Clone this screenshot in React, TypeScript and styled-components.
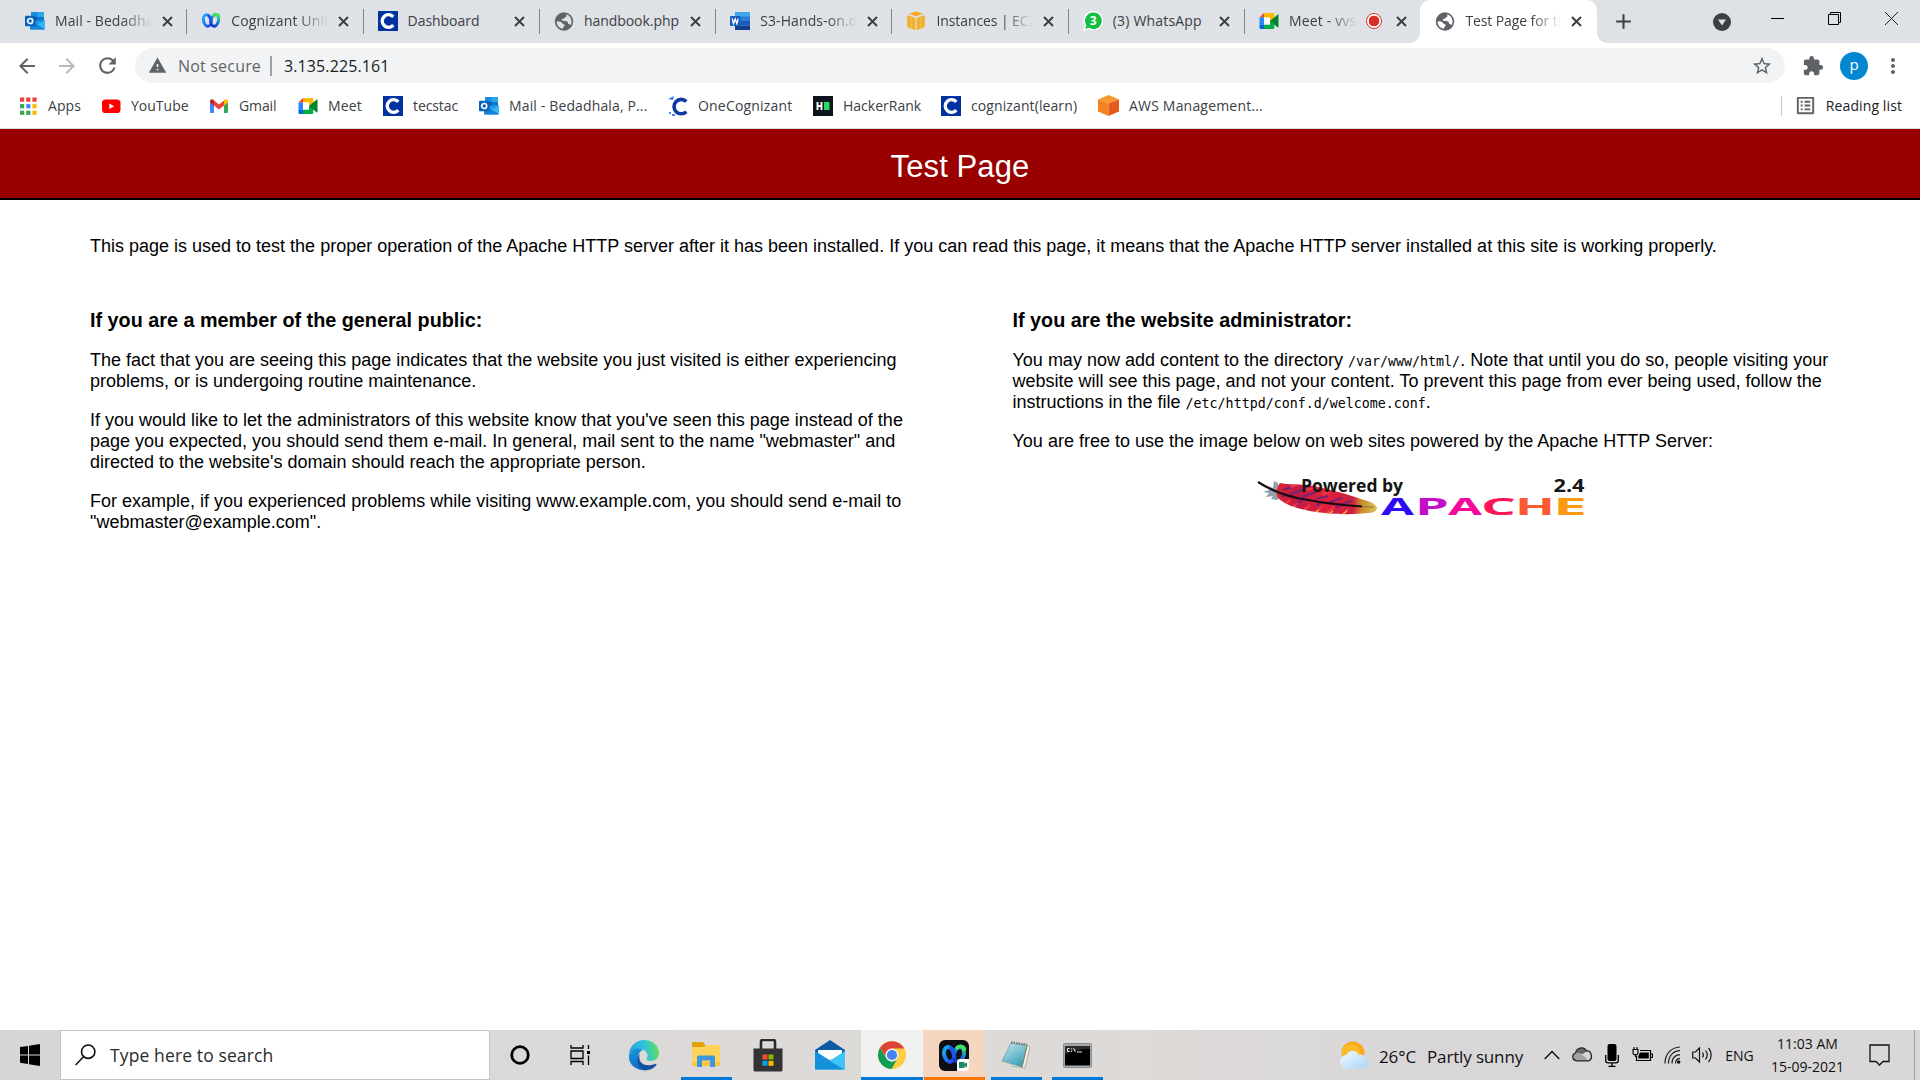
import React from "react";
import styled, { createGlobalStyle, css } from "styled-components";
import {
  MdWarning,
  MdRefresh,
  MdArrowBack,
  MdArrowForward,
  MdStarBorder,
  MdExtension,
  MdMoreVert,
  MdAdd,
  MdOutlineListAlt,
} from "react-icons/md";

const ui = `"Open Sans", "Noto Sans", sans-serif`;

const Global = createGlobalStyle`
  * { box-sizing: border-box; }
  body { margin: 0; background: #fff; overflow: hidden; }
  svg { display: block; flex: none; }
`;

const Screen = styled.div`
  width: 1920px;
  height: 1080px;
  display: flex;
  flex-direction: column;
  font-family: ${ui};
  color: #3c4043;
`;

/* ---------- tab strip ---------- */
const TabStrip = styled.div`
  height: 43px;
  display: flex;
  padding-left: 10px;
  background: #dee1e6;
`;

const TabBox = styled.div<{ $active?: boolean; $bare?: boolean }>`
  position: relative;
  width: 176.3px;
  height: 43px;
  flex: none;
  display: flex;
  align-items: center;
  padding: 0 0 1px 15px;
  ${(p) =>
    p.$active
      ? css`
          background: #fff;
          border-radius: 10px 10px 0 0;
          &::before,
          &::after {
            content: "";
            position: absolute;
            bottom: 0;
            width: 10px;
            height: 10px;
          }
          &::before {
            left: -10px;
            background: radial-gradient(circle at 0 0, transparent 9.5px, #fff 10px);
          }
          &::after {
            right: -10px;
            background: radial-gradient(circle at 100% 0, transparent 9.5px, #fff 10px);
          }
        `
      : css`
          &::after {
            content: "";
            position: absolute;
            right: -1px;
            top: 9px;
            width: ${p.$bare ? 0 : 1}px;
            height: 25px;
            background: #80868b;
          }
        `}
`;

const TabLabel = styled.span<{ $w: number; $fade?: boolean; $ls?: number }>`
  width: ${(p) => p.$w}px;
  margin-left: 10px;
  overflow: hidden;
  white-space: nowrap;
  font-size: 14px;
  line-height: 20px;
  letter-spacing: ${(p) => p.$ls ?? 0}px;
  ${(p) =>
    p.$fade &&
    css`
      mask-image: linear-gradient(to right, #000 calc(100% - 30px), transparent);
    `}
`;

const TabClose = styled.span<{ $gap?: number }>`
  width: 20px;
  margin-left: ${(p) => p.$gap ?? 5}px;
  display: flex;
  justify-content: center;
`;

const RecDot = styled.span`
  width: 16px;
  height: 16px;
  margin-left: 8px;
  border: 1.5px solid #d93025;
  border-radius: 50%;
  background: radial-gradient(circle, #d93025 5px, #fff 5.6px);
`;

const NewTab = styled.div`
  width: 53px;
  display: flex;
  align-items: center;
  justify-content: center;
  color: #3c4043;
`;

const Grow = styled.div`
  flex: 1;
`;

const WindowCell = styled.div<{ $w: number; $h: number }>`
  width: ${(p) => p.$w}px;
  height: ${(p) => p.$h}px;
  display: flex;
  align-items: center;
  justify-content: center;
`;

/* ---------- toolbar ---------- */
const Toolbar = styled.div`
  height: 45px;
  display: flex;
  align-items: center;
  padding: 0 9px 0 7px;
  color: #5f6368;
`;

const NavButton = styled.span<{ $dim?: boolean }>`
  width: 40px;
  display: flex;
  justify-content: center;
  color: ${(p) => (p.$dim ? "#bababc" : "#5f6368")};
`;

const Omnibox = styled.div`
  width: 1650px;
  height: 35px;
  margin-left: 8px;
  display: flex;
  align-items: center;
  padding: 0 12px 0 13px;
  border-radius: 18px;
  background: #f1f3f4;
  font-size: 16px;
`;

const NotSecure = styled.span`
  margin-left: 11px;
  padding-right: 9px;
  border-right: 2px solid #9aa0a6;
  line-height: 20px;
  letter-spacing: 0.19px;
`;

const Url = styled.span`
  margin-left: 12px;
  color: #202124;
  letter-spacing: 0.1px;
`;

const ToolCell = styled.span<{ $w: number }>`
  width: ${(p) => p.$w}px;
  display: flex;
  justify-content: center;
`;

const Avatar = styled.span`
  width: 28px;
  height: 28px;
  border-radius: 50%;
  background: #0288d1;
  color: #fff;
  font-size: 15px;
  line-height: 25px;
  text-align: center;
`;

/* ---------- bookmarks ---------- */
const Bookmarks = styled.div`
  height: 41px;
  display: flex;
  align-items: center;
  padding: 0 0 5px 18px;
  border-bottom: 1px solid #dadce0;
  font-size: 14px;
`;

const Bookmark = styled.span<{ $w: number; $ls?: number }>`
  width: ${(p) => p.$w}px;
  display: flex;
  align-items: center;
  gap: 10px;
  white-space: nowrap;
  letter-spacing: ${(p) => p.$ls ?? 0}px;
`;

const ReadingList = styled.span`
  height: 20px;
  display: flex;
  align-items: center;
  gap: 9px;
  padding: 0 18px 0 12px;
  border-left: 1px solid #c4c7cb;
  color: #202124;
  letter-spacing: 0.1px;
`;

/* ---------- page ---------- */
const Banner = styled.header`
  height: 71px;
  background: #990000;
  border-bottom: 2px solid #000;
  color: #fff;
  font: 31px/75px "Liberation Sans", Arial, sans-serif;
  letter-spacing: 0.1px;
  text-align: center;
`;

const Article = styled.main`
  flex: 1;
  padding: 36px 90px 0;
  font: 18px/21px "Liberation Sans", Arial, sans-serif;
  color: #000;
`;

const Intro = styled.p`
  margin: 0 0 52px;
`;

const Columns = styled.div`
  display: grid;
  grid-template-columns: 817.5px 817.5px;
  justify-content: space-between;
`;

const Heading = styled.h2`
  margin: 0 0 18px;
  font-size: 19.8px;
  line-height: 23px;
`;

const Para = styled.p`
  margin: 0 0 18px;
`;

const Code = styled.code`
  font: 13.3px/1 "DejaVu Sans Mono", monospace;
`;

const LogoRow = styled.div`
  display: flex;
  justify-content: center;
  padding-left: 2px;
`;

/* ---------- taskbar ---------- */
const Taskbar = styled.footer`
  height: 50px;
  display: flex;
  background: linear-gradient(to right, #d8d5d8 0, #dcdad8 30%, #dddad8 60%, #d8d6d8 75%, #d9d7d8);
  color: #111;
`;

const TaskCell = styled.div<{ $w: number; $bg?: string }>`
  position: relative;
  width: ${(p) => p.$w}px;
  height: 50px;
  flex: none;
  display: flex;
  align-items: center;
  justify-content: center;
  background: ${(p) => p.$bg ?? "transparent"};
`;

const Running = styled.i<{ $w: number; $color?: string }>`
  position: absolute;
  bottom: 0;
  left: calc(50% - ${(p) => p.$w / 2}px);
  width: ${(p) => p.$w}px;
  height: 3px;
  background: ${(p) => p.$color ?? "#0078d7"};
`;

const Search = styled.div`
  width: 430px;
  height: 50px;
  display: flex;
  align-items: center;
  gap: 14px;
  padding-left: 14px;
  border: 1px solid #c6c4c6;
  background: #fff;
  font-size: 17.5px;
  letter-spacing: 0.12px;
  color: #2b2b2b;
`;

const Weather = styled.div`
  width: 197px;
  display: flex;
  align-items: center;
  font-size: 17px;
  white-space: nowrap;
`;

const Temp = styled.span`
  margin: 3px 11px 0 11px;
  letter-spacing: -0.1px;
`;

const Sky = styled.span`
  margin-top: 3px;
  letter-spacing: -0.15px;
`;

const TrayText = styled.div<{ $w: number }>`
  width: ${(p) => p.$w}px;
  display: flex;
  flex-direction: column;
  align-items: center;
  justify-content: center;
  padding-right: 1px;
  font-size: 14px;
  line-height: 23px;
`;

const DesktopEdge = styled.div`
  width: 6px;
  margin-left: 9px;
  border-left: 1px solid #a3a1a3;
`;

/* ---------- icons ---------- */
const Close = () => (
  <svg width="11" height="11" viewBox="0 0 11 11" stroke="#3c4043" strokeWidth="2">
    <path d="M1 1l9 9M10 1l-9 9" />
  </svg>
);

const Globe = ({ land = "#dee1e6" }: { land?: string }) => (
  <svg width="20" height="19" viewBox="-.5 0 20 19">
    <circle cx="9.500" cy="9.500" r="9.200" fill="#5f6368" />
    <path d="M11.500 2.300c3.300.9 5.500 3.700 5.500 7.200 0 1.400-.3 2.600-1 3.700-.6-.9-1.300-1.200-2.300-1.100-.2-1.600-.4-2.600-1.700-2.900-2.200-.4-4.300.2-4.700-1.200-.3-1.300 2.300-.7 2.700-1.900.3-1.200 1.900-1 2-2.200z" fill={land} />
    <path d="M2.100 9.300c2.200.2 4.800.2 5.300 1.600.4 1.200 2.600.6 2.700 2 .1 1.500-1.600 1.600-1.900 3.900C4.600 16.200 2.100 13.200 2.100 9.300z" fill={land} />
  </svg>
);

const Outlook = () => (
  <svg width="20" height="20" viewBox="0 0 20 20">
    <path d="M6 1h13v12H6z" fill="#0f6cbd" />
    <path d="M6 1h6.500v5H6z" fill="#1490df" />
    <path d="M12.500 1H19v5h-6.500z" fill="#28a8ea" />
    <path d="M6 6h6.500v4.500H6z" fill="#0a5aa8" />
    <path d="M12.500 6H19v4h-6.500z" fill="#0f78d4" />
    <path d="M5 9.500l15 0V17.500a1 1 0 0 1-1 1H6a1 1 0 0 1-1-1z" fill="#1e9be6" />
    <path d="M20 9.500v8.600L12.300 13.600z" fill="#35b8f1" />
    <path d="M5 9l15 9.500H6a1 1 0 0 1-1-1z" fill="#1483d8" />
    <rect x="0" y="4.800" width="10.500" height="10.500" rx="1" fill="#0a63b8" />
    <circle cx="5.200" cy="10" r="2.500" fill="none" stroke="#fff" strokeWidth="1.700" />
  </svg>
);

const WebexMark = ({ size = 20 }: { size?: number }) => (
  <svg width={size} height={size} viewBox="0 0 20 20" fill="none" strokeLinecap="round">
    <defs>
      <linearGradient id="wxL" x1="0" y1="0" x2="0.6" y2="1">
        <stop offset="0" stopColor="#18b8f2" />
        <stop offset="1" stopColor="#1f4df5" />
      </linearGradient>
      <linearGradient id="wxR" x1="0.7" y1="0" x2="0.4" y2="1">
        <stop offset="0" stopColor="#3bd16f" />
        <stop offset="0.35" stopColor="#1a8fd8" />
        <stop offset="1" stopColor="#1230c8" />
      </linearGradient>
    </defs>
    <ellipse cx="6.200" cy="9.500" rx="3.700" ry="5.800" transform="rotate(-14 6.200 9.500)" stroke="url(#wxL)" strokeWidth="3" />
    <ellipse cx="13.800" cy="9.500" rx="3.700" ry="5.800" transform="rotate(14 13.800 9.500)" stroke="url(#wxR)" strokeWidth="3" />
    <path d="M12.500 4.300c1.500-1.400 4.500-1.300 5.500 1" stroke="#46dd6a" strokeWidth="3" />
    <path d="M7.500 4.500c1.800 1.500 2.200 4.500 2.400 6.500" stroke="#1c55f2" strokeWidth="2.600" />
  </svg>
);

const CognizantC = () => (
  <svg width="20" height="20" viewBox="0 0 20 20">
    <rect width="20" height="20" fill="#0033a0" />
    <path d="M15.300 5.900A6.300 6.300 0 1 0 15.300 14.100" fill="none" stroke="#fff" strokeWidth="3.300" />
  </svg>
);

const OneCognizant = () => (
  <svg width="20" height="20" viewBox="0 0 20 20">
    <path d="M0 3L6 0 5 4z" fill="#2f7df6" />
    <path d="M1 16h2v2H1zM4 18h3v2H4z" fill="#4a8cf7" />
    <path d="M18.300 5.500A7.200 7.200 0 1 0 18.300 15.700" fill="none" stroke="#0b3aa6" strokeWidth="3.600" />
  </svg>
);

const Word = () => (
  <svg width="20" height="20" viewBox="0 0 20 20">
    <path d="M5 1h15v5H5z" fill="#41a5ee" />
    <path d="M5 5.500h15V10H5z" fill="#2b7cd3" />
    <path d="M5 10h15v4.500H5z" fill="#185abd" />
    <path d="M5 14.500h15V19H5z" fill="#103f91" />
    <rect x="0" y="5" width="10.500" height="10" rx="1" fill="#185abd" />
    <path d="M2.200 7.500l1.300 5.200 1.700-4.700 1.700 4.700 1.300-5.200" fill="none" stroke="#fff" strokeWidth="1.300" />
  </svg>
);

const Instances = () => (
  <svg width="20" height="20" viewBox="0 0 20 20">
    <path d="M10 .5l7 2.200-7 2.600-7-2.600z" fill="#fba919" />
    <path d="M1.200 4.200L9.400 7v12.300l-8.200-3.300z" fill="#f2b02c" />
    <path d="M18.800 4.200l-8.200 2.800v12.300l8.200-3.300z" fill="#f2b02c" />
    <path d="M5.300 5.800v12M14.700 5.800v12" stroke="#f8c860" strokeWidth=".6" />
  </svg>
);

const WhatsBadge = () => (
  <svg width="20" height="20" viewBox="0 0 20 20">
    <path d="M10.300 0a9.700 9.700 0 1 1-4.500 18.300L0 20l1.700-5.500A9.700 9.700 0 0 1 10.300 0z" fill="#fff" />
    <path d="M10.300 1.500a8.300 8.300 0 1 1-4.300 15.300L2.200 18l1.200-3.700A8.300 8.300 0 0 1 10.300 1.500z" fill="#12bf42" />
    <text x="10.200" y="14.400" fontSize="12" fontWeight="700" fill="#fff" textAnchor="middle" fontFamily="Open Sans, sans-serif">3</text>
  </svg>
);

const MeetMark = () => (
  <svg width="20" height="18" viewBox="0 0 20 18">
    <path d="M5 1h9a1.300 1.300 0 0 1 1.300 1.300V9H11V5.500H5z" fill="#ffba00" />
    <path d="M5 1v4.500H.5z" fill="#ea4335" />
    <path d="M.5 5.500H5v7H.5z" fill="#2684fc" />
    <path d="M.5 12.500H5V17H1.800A1.300 1.300 0 0 1 .5 15.700z" fill="#0066da" />
    <path d="M5 12.500h6V9h4.300v6.700A1.300 1.300 0 0 1 14 17H5z" fill="#00ac47" />
    <path d="M5 5.500h6v7H5z" fill="#fff" />
    <path d="M11 9l7.500-6.300c.5-.4 1-.1 1 .5v11.600c0 .6-.5.9-1 .5z" fill="#00832d" />
  </svg>
);

const AppsGrid = () => {
  const colors = ["#ea4335", "#ea4335", "#ea4335", "#34a853", "#4285f4", "#fbbc05", "#34a853", "#34a853", "#fbbc05"];
  return (
    <svg width="20" height="20" viewBox="0 0 20 20">
      {colors.map((c, i) => (
        <rect key={i} x={2 + (i % 3) * 6.200} y={1.500 + Math.floor(i / 3) * 6.600} width="4.200" height="4.200" fill={c} />
      ))}
    </svg>
  );
};

const YouTube = () => (
  <svg width="20" height="20" viewBox="0 0 20 20">
    <rect x="1" y="3.500" width="18.500" height="13.500" rx="3.600" fill="#f00" />
    <path d="M8.300 7.500l5 2.800-5 2.800z" fill="#fff" />
  </svg>
);

const Gmail = () => (
  <svg width="20" height="20" viewBox="0 0 20 20">
    <path d="M1 6l4 3v8H2.200A1.200 1.200 0 0 1 1 15.800z" fill="#4285f4" />
    <path d="M19 6l-4 3v8h2.800a1.200 1.200 0 0 0 1.200-1.200z" fill="#34a853" />
    <path d="M5 4.500l5 3.900 5-3.900v5l-5 3.900-5-3.900z" fill="#ea4335" />
    <path d="M1 5.400C1 3.300 3.200 2.800 4.300 3.800L5 4.500v5L1 6.500z" fill="#c5221f" />
    <path d="M19 5.400c0-2.100-2.200-2.600-3.300-1.600l-.7.700v5l4-3z" fill="#fbbc04" />
  </svg>
);

const Hacker = () => (
  <svg width="20" height="20" viewBox="0 0 20 20">
    <rect width="20" height="20" fill="#0e141e" />
    <path d="M4.500 6v8M8.500 6v8M4.500 10h4" stroke="#fff" strokeWidth="1.900" />
    <rect x="11" y="6" width="5.500" height="8" fill="#1ee05f" />
  </svg>
);

const AwsCube = () => (
  <svg width="21" height="21" viewBox="0 0 21 21">
    <path d="M10.500 0L21 4.500 10.500 8.500 0 4.500z" fill="#fb9a2c" />
    <path d="M0 4.500l10.500 4V21L0 16.500z" fill="#f58220" />
    <path d="M21 4.500l-10.500 4V21L21 16.500z" fill="#e8591c" />
  </svg>
);

const Feather = () => (
  <svg width="330" height="50" viewBox="1257 470 330 50">
    <defs>
      <linearGradient id="fth" x1="1278" y1="0" x2="1378" y2="0" gradientUnits="userSpaceOnUse">
        <stop offset="0" stopColor="#de2233" />
        <stop offset=".2" stopColor="#c01c44" />
        <stop offset=".45" stopColor="#e0203a" />
        <stop offset=".75" stopColor="#cc2040" />
        <stop offset=".83" stopColor="#c98a2e" />
        <stop offset="1" stopColor="#dcc75a" />
      </linearGradient>
      <clipPath id="vane">
        <path d="M1280 483l6 1 22 1c18 3 42 10 56 15 8 2 13 5 13 8 0 3-4 5-10 5-8 1-26 2-42 0-12-1-22-3-34-7-7-3-13-7-14-10-1-4 0-9 3-13z" />
      </clipPath>
    </defs>
    <path d="M1274 481l4 2 2 10-2 7-7-1 2-3-7 1 3-4-6-1 6-2-1-4 5 2z" fill="#93a1ac" />
    <g clipPath="url(#vane)">
      <rect x="1270" y="480" width="110" height="38" fill="url(#fth)" />
      <path d="M1283 490l9-3M1290 494l16-5M1302 497l14-5M1316 499l12-3M1330 502l12-4M1343 504l8-3M1282 497l5-3M1296 505l7-6M1316 506l6-4M1336 508l7-4" stroke="#5b2386" strokeWidth="2" opacity=".75" />
      <path d="M1280 508l10-8M1290 510l8-7M1302 512l8-7M1314 513l8-6M1326 514l8-7M1342 515l6-6M1354 515l5-6M1290 487l10-3M1306 490l12-3M1322 494l8-2" stroke="#fa4148" strokeWidth="2" opacity=".8" />
      <path d="M1290 509l4-3M1300 512l5-3M1313 514l6-4M1327 515l6-4M1342 515l5-4" stroke="#e7c34f" strokeWidth="1.300" />
    </g>
    <path d="M1258 482c14 9 30 15 50 18 18 3.500 34 5 54 6.500" fill="none" stroke="#160c14" strokeWidth="2.200" />
    <path d="M1362 506.500l12 .8" fill="none" stroke="#8a7430" strokeWidth="1" />
    <text x="1301" y="492" fontSize="18" fontWeight="700" fill="#151515" fontFamily="Open Sans, sans-serif" textLength="102" lengthAdjust="spacingAndGlyphs">Powered by</text>
    <text x="1553.500" y="492" fontSize="18" fontWeight="700" fill="#151515" fontFamily="Open Sans, sans-serif" textLength="31" lengthAdjust="spacingAndGlyphs">2.4</text>
    <g fontFamily="Open Sans, sans-serif" fontWeight="700" fontSize="22.800">
      <text x="1381" y="514.500" fill="#2f0af5" textLength="33" lengthAdjust="spacingAndGlyphs">A</text>
      <text x="1415" y="514.500" fill="#c40fc9" textLength="34" lengthAdjust="spacingAndGlyphs">P</text>
      <text x="1448" y="514.500" fill="#f30a9b" textLength="34" lengthAdjust="spacingAndGlyphs">A</text>
      <text x="1481" y="514.500" fill="#fb1658" textLength="35" lengthAdjust="spacingAndGlyphs">C</text>
      <text x="1515" y="514.500" fill="#fb5a33" textLength="40" lengthAdjust="spacingAndGlyphs">H</text>
      <text x="1553" y="514.500" fill="#fd9a12" textLength="34" lengthAdjust="spacingAndGlyphs">E</text>
    </g>
  </svg>
);

const Windows = () => (
  <svg width="20" height="22" viewBox="0 0 20 22">
    <path d="M0 3.100l8 -1.200v8.500H0zM9 1.750L20 0v10.400H9zM0 11.500h8V20l-8-1.200zM9 11.500h11V22L9 20.300z" fill="#000" />
  </svg>
);

const Magnifier = () => (
  <svg width="21" height="22" viewBox="0 0 21 22" fill="none" stroke="#111" strokeWidth="1.600">
    <circle cx="13.200" cy="7.700" r="6.700" />
    <path d="M8.500 12.700L.7 21" />
  </svg>
);

const TaskView = () => (
  <svg width="22" height="22" viewBox="0 0 22 22" fill="none" stroke="#000" strokeWidth="1.300">
    <path d="M1 1v3h12V1M1 21v-3.500h12V21M1 7h12v7.500H1zM18.500 1v4M18.500 11.500V21" />
    <path d="M17 7h3v3h-3z" fill="#000" stroke="none" />
  </svg>
);

const Edge = () => (
  <svg width="32" height="32" viewBox="0 0 32 32">
    <defs>
      <linearGradient id="eTop" x1="0" y1=".5" x2="1" y2=".4">
        <stop offset="0" stopColor="#1f9fe0" />
        <stop offset=".5" stopColor="#2fc2df" />
        <stop offset="1" stopColor="#62df5a" />
      </linearGradient>
      <linearGradient id="eBody" x1="0" y1="0" x2=".6" y2="1">
        <stop offset="0" stopColor="#1b9de2" />
        <stop offset="1" stopColor="#0c62b8" />
      </linearGradient>
    </defs>
    <path d="M1 15C2 6 9 1 16 1c9 0 15 6 15 13 0 5-4 8-8 8-3 0-5-1-4.500-2.500C20 18 20 15 18 13 14 8 5 9 1 15z" fill="url(#eTop)" />
    <path d="M1 16C3 10 10 8 15 11c-3 1-5 4-5 8 0 6 5 10 10 12-2 .5-4 .5-6 0C6 30 0 24 1 16z" fill="url(#eBody)" />
    <path d="M12 15c-3 8 4 14 15 10 1.500-.5 2 .5 1 1.500C25 30 21 31.500 17.500 31 10 29 7 20 12 15z" fill="#124f9c" />
  </svg>
);

const Explorer = () => (
  <svg width="28" height="26" viewBox="0 0 28 26">
    <path d="M0 1a1 1 0 0 1 1-1h10l2 3v4H0z" fill="#e3a008" />
    <path d="M0 5h12l2-2h13a1 1 0 0 1 1 1v20H0z" fill="#ffd35a" />
    <path d="M0 20h28v4H0z" fill="#fbc540" />
    <path d="M5 25V15a1.500 1.500 0 0 1 1.500-1.500h15A1.500 1.500 0 0 1 23 15v10h-5v-6.500h-8V25z" fill="#3f97dd" />
  </svg>
);

const Store = () => (
  <svg width="30" height="33" viewBox="0 0 30 33">
    <path d="M8 10V2.500A1.500 1.500 0 0 1 9.500 1h11A1.500 1.500 0 0 1 22 2.500V10" fill="none" stroke="#2b2b2b" strokeWidth="2.600" />
    <path d="M.5 9.500h29V31a1.500 1.500 0 0 1-1.500 1.500H2A1.500 1.500 0 0 1 .5 31z" fill="#333" />
    <path d="M9.500 15.500h5v5h-5z" fill="#f25022" />
    <path d="M15.500 15.500h5v5h-5z" fill="#7fba00" />
    <path d="M9.500 21.800h5v5h-5z" fill="#00a4ef" />
    <path d="M15.500 21.800h5v5h-5z" fill="#ffb900" />
  </svg>
);

const Mail = () => (
  <svg width="30" height="30" viewBox="0 0 30 30">
    <path d="M0 10L15 0l15 10v6H0z" fill="#0c59a4" />
    <path d="M3 10h24v9H3z" fill="#fff" />
    <path d="M0 11l15 10 15-10v18.500H0z" fill="#2bb3ee" />
    <path d="M0 11l29 18.500H0z" fill="#1591dc" />
    <path d="M30 11v18.500h-1L15 21z" fill="#3cc5f5" />
  </svg>
);

const Chrome = () => (
  <svg width="28" height="28" viewBox="0 0 28 28">
    <circle cx="14" cy="14" r="14" fill="#ffcd40" />
    <path d="M1.880 7A14 14 0 0 1 26.120 7.500H14A6.500 6.500 0 0 0 8 16z" fill="#db4437" />
    <path d="M1.880 7A14 14 0 0 0 13.500 28l6.100-10.700a6.500 6.500 0 0 1-11.400-.4z" fill="#0f9d58" />
    <circle cx="14" cy="14" r="6.500" fill="#f1f1f1" />
    <circle cx="14" cy="14" r="5.100" fill="#4285f4" />
  </svg>
);

const WebexBox = styled.span`
  position: relative;
  width: 30px;
  height: 31px;
  display: flex;
  align-items: center;
  justify-content: center;
  border-radius: 6px;
  background: #0d0f12;
`;

const WebexBadge = styled.span`
  position: absolute;
  right: 0;
  bottom: 0;
  width: 12px;
  height: 12px;
  display: flex;
  align-items: center;
  justify-content: center;
  border-radius: 3px 0 4px 0;
  background: #fff;
`;

const Notepad = () => (
  <svg width="30" height="28" viewBox="0 0 30 28">
    <defs>
      <linearGradient id="np" x1="0" y1="0" x2=".6" y2="1">
        <stop offset="0" stopColor="#c9eaf0" />
        <stop offset="1" stopColor="#3ba0b5" />
      </linearGradient>
    </defs>
    <path d="M26 4l3 2-5 21-13-2z" fill="#f3efe4" stroke="#a79f8c" strokeWidth=".8" />
    <path d="M10 2l16 2-5 22L1 20z" fill="url(#np)" stroke="#6f9ca6" strokeWidth=".7" />
    <path d="M10 1.500l16 2.300" stroke="#7b7f80" strokeWidth="2.500" strokeDasharray="1.500 1" />
    <path d="M26 5l-5 21" stroke="#8f7d55" strokeWidth="1" />
  </svg>
);

const Terminal = () => (
  <svg width="29" height="25" viewBox="0 0 29 25">
    <rect x=".5" y=".5" width="28" height="24" rx="1" fill="#a5a8ac" stroke="#8b8e92" />
    <rect x="2" y="3" width="25" height="19.500" fill="#000" />
    <path d="M2 3h25v3c-8 0-18 2-25 5z" fill="#2b2b2b" />
    <path d="M6.500 5.500H4.500v3h2M8.500 5.500v1M8.500 8v1M10.500 5l2 4M14 9h5" stroke="#e8e8e8" strokeWidth="1" fill="none" />
  </svg>
);

const SunCloud = () => (
  <svg width="28" height="28" viewBox="0 0 28 28">
    <defs>
      <linearGradient id="cl" x1="0" y1="0" x2="1" y2="1">
        <stop offset="0" stopColor="#f4faff" />
        <stop offset="1" stopColor="#a9d5f6" />
      </linearGradient>
    </defs>
    <circle cx="13" cy="12" r="11.500" fill="#fba919" />
    <circle cx="11" cy="12" r="9" fill="#fdbb2a" />
    <path d="M7.500 27.800a7 7 0 0 1-.7-14c1.500-5 9.500-5.500 12 0 4-1 6.700 1 6.500 4.500 4.500 1.500 3.500 9.500-2 9.500z" fill="url(#cl)" />
  </svg>
);

const ChevronUp = () => (
  <svg width="16" height="10" viewBox="0 0 16 10" fill="none" stroke="#111" strokeWidth="1.400">
    <path d="M.7 9L8 1.500 15.300 9" />
  </svg>
);

const OneDrive = () => (
  <svg width="21" height="18" viewBox="0 0 21 18">
    <path d="M4.500 14.800A4 4 0 0 1 3.600 7C4.200 2 11.500-.5 14.500 5c5-.5 7 7.500 2.200 9.800z" fill="#d6d6d6" />
    <path d="M4 7.200C4.600 2.500 11.500 0 14.200 5.500L11 8z" fill="#666" />
    <path d="M4 7.200l3.500-.4L14 12l2 2.500H4.500A3.800 3.800 0 0 1 4 7.200z" fill="#a2a2a2" />
    <path d="M4.500 14.800A4 4 0 0 1 3.600 7C4.200 2 11.500-.5 14.500 5c5-.5 7 7.500 2.200 9.800z" fill="none" stroke="#222" strokeWidth="1.300" />
  </svg>
);

const Mic = () => (
  <svg width="14" height="23" viewBox="0 0 14 23">
    <rect x="2.500" y="0" width="9" height="17" rx="2" fill="#000" />
    <path d="M.7 11v5.500c0 1.500 1 2.300 2.300 2.300h8c1.300 0 2.300-.8 2.300-2.300V11M7 19v3M3.500 22.300h7" fill="none" stroke="#000" strokeWidth="1.300" />
  </svg>
);

const Battery = () => (
  <svg width="21" height="16" viewBox="0 0 21 16">
    <path d="M8 3.500h10.500v10H4.500V9M19 7h1.500v3.500H19" fill="none" stroke="#000" strokeWidth="1.200" />
    <path d="M8 5.400h8.800v6.200H6.300V9z" fill="#000" />
    <path d="M1 2.500h5v3A2 2 0 0 1 1 5.500zM2 0v2.500M5 0v2.500M3.500 7v3" stroke="#000" strokeWidth="1.100" fill="none" />
  </svg>
);

const Wifi = () => (
  <svg width="17" height="18" viewBox="0 0 17 18" fill="none" stroke="#222" strokeWidth="1.200">
    <path d="M1 17.500C1 8 7 1.500 16 1M4.500 17.500C4.500 10 9 5 16 4.700M8 17.500C8 12.500 11 9 16 8.600M11.500 17.500c0-3 1.500-5 4.500-5.200" />
    <circle cx="14.700" cy="16" r="1.700" fill="#000" stroke="none" />
  </svg>
);

const Volume = () => (
  <svg width="21" height="18" viewBox="0 0 21 18" fill="none" stroke="#111" strokeWidth="1.200">
    <path d="M.7 6h2.800L7.500 2v14l-4-4H.7zM10.500 6.500c1 1.400 1 3.600 0 5M13.500 4.500c2 2.600 2 6.400 0 9M16.500 2c3.500 4 3.500 10 0 14" />
  </svg>
);

const Notification = () => (
  <svg width="21" height="22" viewBox="0 0 21 22" fill="none" stroke="#111" strokeWidth="1.300">
    <path d="M1 1h19v16.500h-6l-3.500 3.500L7 17.500H1z" />
  </svg>
);

/* ---------- data ---------- */
type TabInfo = { icon: React.ReactNode; text: string; ls?: number; fade?: boolean };

const tabs: TabInfo[] = [
  { icon: <Outlook />, text: "Mail - Bedadhala", fade: true, ls: 0.08 },
  { icon: <WebexMark />, text: "Cognizant Unified", fade: true, ls: 0.15 },
  { icon: <CognizantC />, text: "Dashboard", ls: -0.05 },
  { icon: <Globe />, text: "handbook.php", ls: -0.05 },
  { icon: <Word />, text: "S3-Hands-on.docx", fade: true, ls: 0.1 },
  { icon: <Instances />, text: "Instances | EC2 M", fade: true, ls: -0.1 },
  { icon: <WhatsBadge />, text: "(3) WhatsApp", ls: 0.18 },
];

export default function App() {
  return (
    <Screen>
      <Global />
      <TabStrip>
        {tabs.map((t) => (
          <TabBox key={t.text}>
            {t.icon}
            <TabLabel $w={97} $fade={t.fade} $ls={t.ls}>{t.text}</TabLabel>
            <TabClose><Close /></TabClose>
          </TabBox>
        ))}
        <TabBox $bare>
          <MeetMark />
          <TabLabel $w={69} $fade $ls={0.15}>Meet - vvs-i</TabLabel>
          <RecDot />
          <TabClose $gap={9}><Close /></TabClose>
        </TabBox>
        <TabBox $active>
          <Globe land="#fff" />
          <TabLabel $w={96} $fade $ls={-0.1}>Test Page for the</TabLabel>
          <TabClose><Close /></TabClose>
        </TabBox>
        <NewTab><MdAdd size={25} /></NewTab>
        <Grow />
        <WindowCell $w={54} $h={43}>
          <svg width="18" height="18" viewBox="0 0 18 18">
            <circle cx="9" cy="9" r="9" fill="#3c4043" />
            <path d="M5 6.500h8L9 12.500z" fill="#dee1e6" />
          </svg>
        </WindowCell>
        <WindowCell $w={57} $h={37}>
          <svg width="13" height="2" viewBox="0 0 13 2"><path d="M0 0h13v1H0z" fill="#000" /></svg>
        </WindowCell>
        <WindowCell $w={57} $h={37}>
          <svg width="13" height="13" viewBox="0 0 13 13" fill="none" stroke="#000">
            <path d="M.5 2.500h10v10H.5zM2.500 2.500v-2h10v10h-2" />
          </svg>
        </WindowCell>
        <WindowCell $w={57} $h={37}>
          <svg width="13" height="13" viewBox="0 0 13 13" stroke="#222"><path d="M0 0l13 13M13 0L0 13" /></svg>
        </WindowCell>
      </TabStrip>

      <Toolbar>
        <NavButton><MdArrowBack size={24} /></NavButton>
        <NavButton $dim><MdArrowForward size={24} /></NavButton>
        <NavButton><MdRefresh size={25} /></NavButton>
        <Omnibox>
          <MdWarning size={19} />
          <NotSecure>Not secure</NotSecure>
          <Url>3.135.225.161</Url>
          <Grow />
          <MdStarBorder size={22} />
        </Omnibox>
        <Grow />
        <ToolCell $w={40}><MdExtension size={22} /></ToolCell>
        <ToolCell $w={42}><Avatar>p</Avatar></ToolCell>
        <ToolCell $w={36}><MdMoreVert size={24} /></ToolCell>
      </Toolbar>

      <Bookmarks>
        <Bookmark $w={83} $ls={0.09}><AppsGrid />Apps</Bookmark>
        <Bookmark $w={108}><YouTube />YouTube</Bookmark>
        <Bookmark $w={89} $ls={-0.1}><Gmail />Gmail</Bookmark>
        <Bookmark $w={85} $ls={0.17}><MeetMark />Meet</Bookmark>
        <Bookmark $w={96} $ls={-0.1}><CognizantC />tecstac</Bookmark>
        <Bookmark $w={189} $ls={0.14}><Outlook />Mail - Bedadhala, P...</Bookmark>
        <Bookmark $w={145} $ls={0.19}><OneCognizant />OneCognizant</Bookmark>
        <Bookmark $w={128}><Hacker />HackerRank</Bookmark>
        <Bookmark $w={157} $ls={0.1}><CognizantC />cognizant(learn)</Bookmark>
        <Bookmark $w={170} $ls={0.19}><AwsCube />AWS Management...</Bookmark>
        <Grow />
        <ReadingList><MdOutlineListAlt size={23} color="#5f6368" />Reading list</ReadingList>
      </Bookmarks>

      <Banner>Test Page</Banner>

      <Article>
        <Intro>
          This page is used to test the proper operation of the Apache HTTP server after it has been installed. If you can
          read this page, it means that the Apache HTTP server installed at this site is working properly.
        </Intro>
        <Columns>
          <section>
            <Heading>If you are a member of the general public:</Heading>
            <Para>
              The fact that you are seeing this page indicates that the website you just visited is either experiencing
              problems, or is undergoing routine maintenance.
            </Para>
            <Para>
              If you would like to let the administrators of this website know that you've seen this page instead of the
              page you expected, you should send them e-mail. In general, mail sent to the name "webmaster" and directed
              to the website's domain should reach the appropriate person.
            </Para>
            <Para>
              For example, if you experienced problems while visiting www.example.com, you should send e-mail to
              "webmaster@example.com".
            </Para>
          </section>
          <section>
            <Heading>If you are the website administrator:</Heading>
            <Para>
              You may now add content to the directory <Code>/var/www/html/</Code>. Note that until you do so, people
              visiting your website will see this page, and not your content. To prevent this page from ever being used,
              follow the instructions in the file <Code>/etc/httpd/conf.d/welcome.conf</Code>.
            </Para>
            <Para>You are free to use the image below on web sites powered by the Apache HTTP Server:</Para>
            <LogoRow><Feather /></LogoRow>
          </section>
        </Columns>
      </Article>

      <Taskbar>
        <TaskCell $w={60}><Windows /></TaskCell>
        <Search><Magnifier />Type here to search</Search>
        <TaskCell $w={60}>
          <svg width="20" height="20" viewBox="0 0 20 20"><circle cx="10" cy="10" r="8.300" fill="none" stroke="#000" strokeWidth="2.800" /></svg>
        </TaskCell>
        <TaskCell $w={62}><TaskView /></TaskCell>
        <TaskCell $w={63}><Edge /></TaskCell>
        <TaskCell $w={62}><Explorer /><Running $w={51} /></TaskCell>
        <TaskCell $w={62}><Store /></TaskCell>
        <TaskCell $w={62}><Mail /></TaskCell>
        <TaskCell $w={62} $bg="#f2f1f1"><Chrome /><Running $w={62} /></TaskCell>
        <TaskCell $w={62} $bg="#f5d6be">
          <WebexBox>
            <WebexMark size={26} />
            <WebexBadge>
              <svg width="8" height="6" viewBox="0 0 8 6"><path d="M0 0h5.500v1.700L8 .5v5L5.500 4.300V6H0z" fill="#1f8a66" /></svg>
            </WebexBadge>
          </WebexBox>
          <Running $w={61} $color="#ff7400" />
        </TaskCell>
        <TaskCell $w={62}><Notepad /><Running $w={51} /></TaskCell>
        <TaskCell $w={61}><Terminal /><Running $w={51} /></TaskCell>
        <Grow />
        <Weather><SunCloud /><Temp>26°C</Temp><Sky>Partly sunny</Sky></Weather>
        <TaskCell $w={30}><ChevronUp /></TaskCell>
        <TaskCell $w={30}><OneDrive /></TaskCell>
        <TaskCell $w={30}><Mic /></TaskCell>
        <TaskCell $w={30}><Battery /></TaskCell>
        <TaskCell $w={30}><Wifi /></TaskCell>
        <TaskCell $w={30}><Volume /></TaskCell>
        <TrayText $w={46}>ENG</TrayText>
        <TrayText $w={90}><span>11:03 AM</span><span>15-09-2021</span></TrayText>
        <TaskCell $w={52}><Notification /></TaskCell>
        <DesktopEdge />
      </Taskbar>
    </Screen>
  );
}
